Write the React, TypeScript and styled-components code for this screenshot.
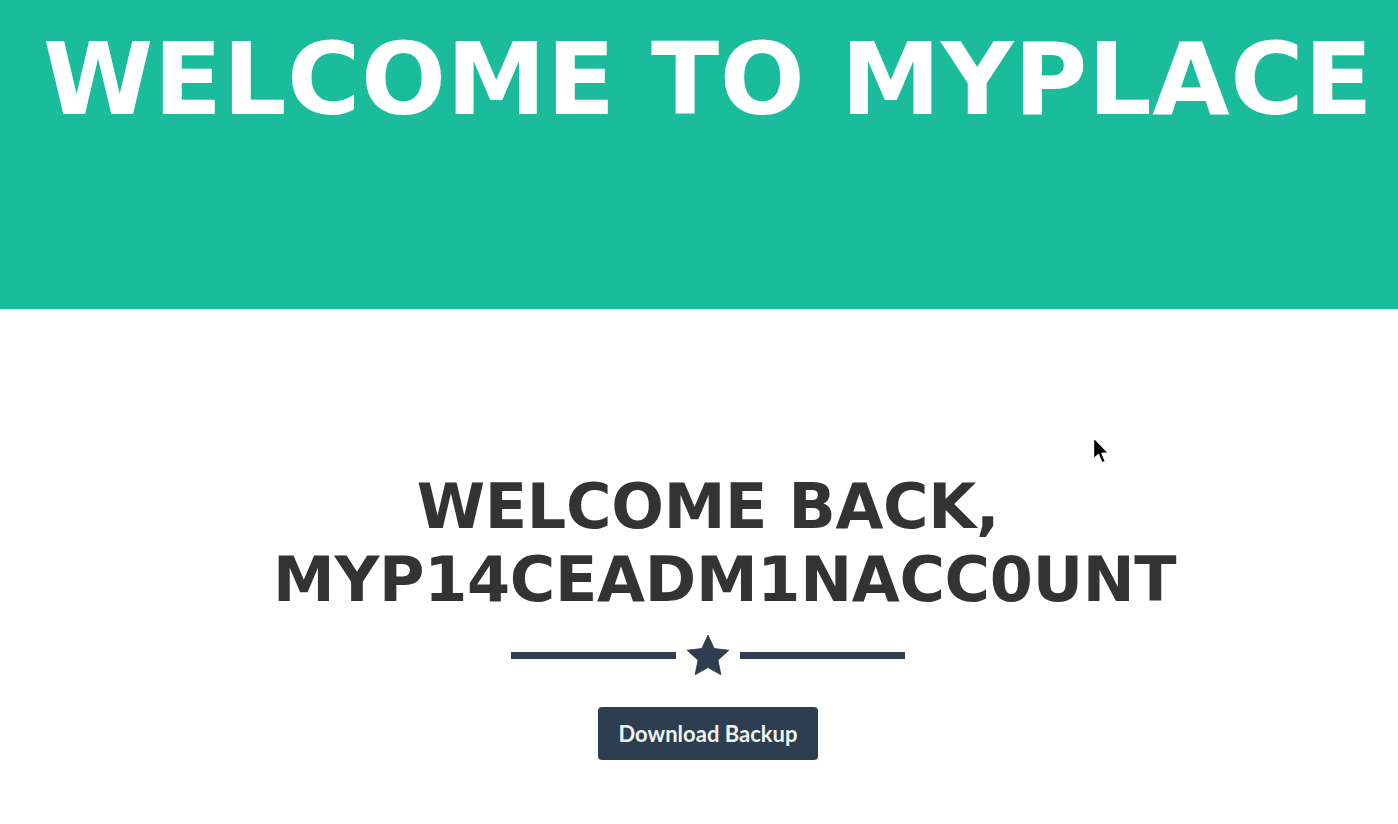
import React from 'react'
import styled, { createGlobalStyle } from 'styled-components'

const GlobalStyle = createGlobalStyle`
    html, body {
        margin: 0;
        padding: 0;
        background: #ffffff;
        font-family: "DejaVu Sans", "Liberation Sans", sans-serif;
    }
`

const Page = styled.div`
    position: relative;
    width: 100%;
    min-height: 824px;
    overflow: hidden;
`

const Header = styled.header`
    height: 309px;
    background-color: #1abc9c;
    padding-top: 30px;
    padding-left: 18px;
    box-sizing: border-box;
`

const HeaderTitle = styled.h1`
    margin: 0;
    color: #ffffff;
    font-family: "DejaVu Sans", sans-serif;
    font-weight: 700;
    font-size: 100px;
    line-height: 100px;
    text-align: center;
    letter-spacing: 0.6px;
    white-space: nowrap;
`

const Section = styled.section`
    display: flex;
    flex-direction: column;
    align-items: center;
    padding-top: 161px;
    padding-left: 18px;
`

const Greeting = styled.h2`
    width: 870px;
    margin: 0;
    color: #333333;
    font-family: "DejaVu Sans", sans-serif;
    font-weight: 700;
    font-size: 62px;
    line-height: 73px;
    letter-spacing: -0.3px;
    text-align: center;
`

const Divider = styled.div`
    display: flex;
    align-items: center;
    gap: 11px;
    margin-top: 19px;
    height: 40px;
`

const Line = styled.span`
    display: block;
    width: 165px;
    height: 7px;
    background-color: #2c3e50;
`

const Star = styled.svg`
    display: block;
    width: 42px;
    height: 40px;
`

const Button = styled.button`
    margin-top: 32px;
    width: 220px;
    height: 53px;
    border: none;
    border-radius: 4px;
    background-color: #2c3e50;
    color: #f2f2f2;
    font-family: Lato, "Liberation Sans", sans-serif;
    font-weight: 700;
    font-size: 22px;
    cursor: pointer;
`

const Cursor = styled.svg`
    position: absolute;
    left: 1092px;
    top: 436px;
`

export default function App() {
    return (
        <Page>
            <GlobalStyle />
            <Header>
                <HeaderTitle>WELCOME TO MYPLACE</HeaderTitle>
            </Header>
            <Section>
                <Greeting>WELCOME BACK, MYP14CEADM1NACC0UNT</Greeting>
                <Divider>
                    <Line />
                    <Star viewBox="1 0.5 42 40">
                        <polygon
                            points="22,0.5 28.2,14 42.9,15.7 32,25.7 34.9,40.3 22,33 9.1,40.3 12,25.7 1.1,15.7 15.8,14"
                            fill="#2c3e50"
                            stroke="#2c3e50"
                            strokeWidth="0.8"
                            strokeLinejoin="round"
                        />
                    </Star>
                    <Line />
                </Divider>
                <Button>Download Backup</Button>
            </Section>
            <Cursor width="22" height="32" viewBox="0 0 22 32">
                <path d="M1.5 1.5 L1.5 23 L6.5 18.5 L10 27 L13.5 25.5 L10 17.5 L16.5 17 Z" fill="#000" stroke="#fff" strokeWidth="1.4" strokeLinejoin="round" />
            </Cursor>
        </Page>
    )
}
